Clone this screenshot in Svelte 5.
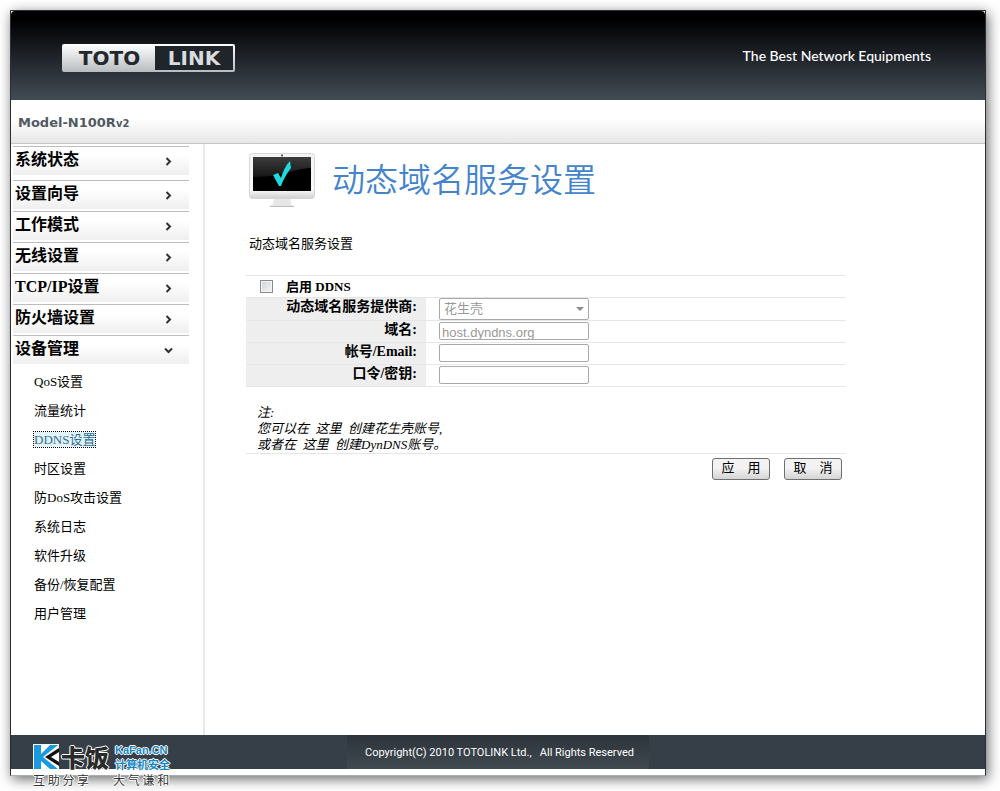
<script lang="ts">
type MenuItem = { label: string, open?: boolean }

const menu: MenuItem[] = [
    { label: "系统状态" },
    { label: "设置向导" },
    { label: "工作模式" },
    { label: "无线设置" },
    { label: "TCP/IP设置" },
    { label: "防火墙设置" },
    { label: "设备管理", open: true }
]

const submenu = [
    "QoS设置",
    "流量统计",
    "DDNS设置",
    "时区设置",
    "防DoS攻击设置",
    "系统日志",
    "软件升级",
    "备份/恢复配置",
    "用户管理"
]

let current = $state("DDNS设置")
let enabled = $state(false)
let provider = $state("花生壳")
let domain = $state("host.dyndns.org")
let account = $state("")
let password = $state("")

function select(ev: MouseEvent, name: string) {
    ev.preventDefault()
    current = name
}

function reset() {
    enabled = false
    account = ""
    password = ""
}
</script>

<div class="frame">
    <header class="header">
        <div class="logo">
            <span class="toto">TOTO</span>
            <span class="link">LINK</span>
        </div>
        <p class="slogan">The Best Network Equipments</p>
    </header>

    <div class="model">Model-N100R<span>v2</span></div>

    <div class="body">
        <nav class="sidebar">
            {#each menu as item}
                <button class="menu-item" aria-expanded={!!item.open}>
                    <span>{item.label}</span>
                    <svg width="9" height="9" viewBox="0 0 9 9">
                        {#if item.open}
                            <path d="M1 2.5 L4.5 6 L8 2.5" />
                        {:else}
                            <path d="M2.5 1 L6 4.5 L2.5 8" />
                        {/if}
                    </svg>
                </button>
            {/each}
            <ul class="submenu">
                {#each submenu as name}
                    <li>
                        <a href="#top" class:active={name === current}
                            onclick={ev => select(ev, name)}>{name}</a>
                    </li>
                {/each}
            </ul>
        </nav>

        <main class="content">
            <div class="title">
                <svg width="66" height="56" viewBox="0 0 66 56">
                    <defs>
                        <linearGradient id="case" x1="0" y1="0" x2="0" y2="1">
                            <stop offset="0" stop-color="#f4f4f4" />
                            <stop offset="0.8" stop-color="#fafafa" />
                            <stop offset="1" stop-color="#cfcfcf" />
                        </linearGradient>
                        <linearGradient id="glass" x1="0" y1="0" x2="0" y2="1">
                            <stop offset="0" stop-color="#3c3c3c" />
                            <stop offset="1" stop-color="#161616" />
                        </linearGradient>
                    </defs>
                    <path d="M25 45 H41 L42 51 L46 54 H20 L24 51 Z" fill="#e6e6e6" />
                    <path d="M21 53.5 H45" stroke="#bcbcbc" />
                    <rect x="0.5" y="0.5" width="65" height="45" rx="3" fill="url(#case)" stroke="#d6d6d6" />
                    <circle cx="33" cy="2.5" r="1" fill="#333" />
                    <rect x="4" y="4" width="58" height="34" fill="#000" />
                    <path d="M4 4 H62 V15 C46 15 36 24 4 24 Z" fill="url(#glass)" />
                    <path d="M24 22 L29 20 L32 25 C34 18 37 12 41 8 L42 15 C38 20 34 27 32 33 L30 33 Z" fill="#1fdbe0" />
                </svg>
                <h1>动态域名服务设置</h1>
            </div>
            <p class="intro">动态域名服务设置</p>

            <form onsubmit={ev => ev.preventDefault()}>
                <table>
                    <tbody>
                        <tr>
                            <td colspan="2" class="toggle">
                                <label>
                                    <input type="checkbox" bind:checked={enabled}>
                                    <span>启用 DDNS</span>
                                </label>
                            </td>
                        </tr>
                        <tr>
                            <th><label for="provider">动态域名服务提供商:</label></th>
                            <td>
                                <div class="dropdown">
                                    <select id="provider" bind:value={provider} disabled={!enabled}>
                                        <option>花生壳</option>
                                        <option>DynDNS</option>
                                    </select>
                                    <svg width="8" height="4" viewBox="0 0 8 4"><path d="M0 0 H8 L4 4 Z" /></svg>
                                </div>
                            </td>
                        </tr>
                        <tr>
                            <th><label for="domain">域名:</label></th>
                            <td><input type="text" id="domain" bind:value={domain} disabled={!enabled}></td>
                        </tr>
                        <tr>
                            <th><label for="account">帐号/Email:</label></th>
                            <td><input type="text" id="account" bind:value={account} disabled={!enabled}></td>
                        </tr>
                        <tr>
                            <th><label for="password">口令/密钥:</label></th>
                            <td><input type="password" id="password" bind:value={password} disabled={!enabled}></td>
                        </tr>
                    </tbody>
                </table>

                <div class="note">
                    注:<br>
                    您可以在&nbsp; <a href="#top">这里</a>&nbsp; 创建花生壳账号,<br>
                    或者在&nbsp; <a href="#top">这里</a>&nbsp; 创建DynDNS账号。
                </div>

                <div class="actions">
                    <button type="submit">应　用</button>
                    <button type="button" onclick={reset}>取　消</button>
                </div>
            </form>
        </main>
    </div>

    <footer class="footer">
        <p>Copyright(C) 2010 TOTOLINK Ltd.,&nbsp;&nbsp; All Rights Reserved</p>
    </footer>

    <div class="stamp">
        <div class="stamp-top">
            <svg width="26" height="26" viewBox="0 0 26 26">
                <rect width="26" height="26" fill="#fff" />
                <path d="M1 1 H8 V10 L17 1 H25 L10 13 L25 25 H17 L8 17 V25 H1 Z" fill="#1c9ae0" />
                <path d="M26 4 L12 13 L26 22 V18 L18 13 L26 8 Z" fill="#111" />
            </svg>
            <strong>卡饭</strong>
            <div class="stamp-site">
                <span class="domain">KaFan.CN</span>
                <span>计算机安全</span>
            </div>
        </div>
        <div class="stamp-bottom">
            <span>互 助 分 享</span>
            <span>大 气 谦 和</span>
        </div>
    </div>
</div>

<style>
    :global(body) {
        margin: 0;
        background-color: #fff;
    }

    .frame {
        box-sizing: border-box;
        min-height: calc(100vh - 25px);
        margin: 10px 14px 15px 10px;
        padding-bottom: 6px;
        border: 1px solid #2a2f35;
        border-bottom: 1px solid #a8adb0;
        background-color: #fff;
        box-shadow: 2px 3px 12px rgba(0, 0, 0, 0.6);
        position: relative;

        display: flex;
        flex-direction: column;
        font-family: "Liberation Serif", "Noto Sans CJK SC", serif;
        font-size: 13px;
        color: #000;
    }

    .header {
        height: 89px;
        padding: 0 54px 0 51px;
        background: linear-gradient(#000 10%, #1e2228 50%, #424b54);
        border-radius: 4px 4px 0 0;

        display: flex;
        align-items: center;
        justify-content: space-between;
    }

    .logo {
        display: flex;
        box-sizing: border-box;
        width: 173px;
        height: 28px;
        margin-top: 4px;
        padding: 2px;
        border-radius: 2px;
        background: linear-gradient(#fff, #b9bcbf);
        font-family: "DejaVu Sans", sans-serif;
        font-size: 20px;
        font-weight: 700;
        line-height: 24px;
    }

    .logo .toto {
        flex: 1;
        text-align: center;
        color: #24282c;
    }

    .logo .link {
        width: 78px;
        text-align: center;
        background-color: #20252b;
        color: #d9dcdf;
    }

    .slogan {
        margin: 0;
        color: #fff;
        font-family: Lato, sans-serif;
        font-size: 14px;
        font-weight: 500;
    }

    .model {
        height: 43px;
        padding-left: 7px;
        border-bottom: 1px solid #c6c6c6;
        background: linear-gradient(#fff 45%, #e6e6e6);
        color: #505963;
        font-family: "DejaVu Sans", sans-serif;
        font-size: 13px;
        font-weight: 700;
        line-height: 45px;
    }

    .model span {
        font-size: 10px;
    }

    .body {
        flex: 1;
        display: flex;
    }

    .sidebar {
        box-sizing: border-box;
        flex: none;
        width: 194px;
        padding: 2px 14px 0 2px;
        border-right: 2px solid #e8e8e8;
    }

    .menu-item {
        box-sizing: border-box;
        width: 100%;
        height: 29px;
        margin: 0 0 2px;
        padding: 0 16px 0 2px;
        border: 0;
        border-top: 1px solid #bdbdbd;
        background: linear-gradient(#fff 30%, #efeff0);
        font: 700 16px/24px "Liberation Serif", "Noto Sans CJK SC", serif;
        color: #000;

        display: flex;
        align-items: center;
        justify-content: space-between;
    }

    .menu-item:first-child {
        margin-bottom: 5px;
    }

    .menu-item span {
        padding-bottom: 2px;
    }

    .menu-item svg path {
        fill: none;
        stroke: #333;
        stroke-width: 2;
    }

    .submenu {
        margin: 0;
        padding: 1px 0 0 21px;
        list-style: none;
        line-height: 29px;
    }

    .submenu a {
        color: #000;
        text-decoration: none;
    }

    .submenu a.active {
        color: #2f6f94;
        background-color: #e3f3fa;
        outline: 1px dotted #000;
    }

    .content {
        flex: 1;
        max-width: 600px;
        padding: 9px 41px 0;
    }

    .title {
        display: flex;
        align-items: center;
        gap: 17px;
        padding-left: 3px;
    }

    h1 {
        margin: 0;
        color: #4384cc;
        font-size: 33px;
        font-weight: 350;
        line-height: 50px;
    }

    .intro {
        margin: 25px 0 21px 3px;
        line-height: 20px;
    }

    table {
        width: 100%;
        border-collapse: collapse;
        border-top: 1px solid #e6e6e6;
    }

    tr {
        height: 22px;
    }

    th, td {
        box-sizing: border-box;
        height: 22px;
        padding: 0;
        border-bottom: 1px solid #e6e6e6;
        line-height: 18px;
    }

    th {
        width: 180px;
        padding-right: 9px;
        background-color: #eee;
        font-size: 14px;
        text-align: right;
        vertical-align: top;
    }

    td {
        padding-left: 13px;
    }

    td.toggle {
        padding-left: 14px;
    }

    .toggle label {
        display: flex;
        align-items: center;
        gap: 13px;
        font-weight: 700;
    }

    input[type="checkbox"] {
        appearance: none;
        box-sizing: border-box;
        width: 13px;
        height: 13px;
        margin: 0;
        border: 1px solid #8b8b8b;
        background: linear-gradient(135deg, #cfd3d8, #f6f6f6);
        box-shadow: inset 0 0 0 1px #f4f4f4;
    }

    input[type="checkbox"]:checked {
        background: #3a6ea5;
    }

    input[type="text"], input[type="password"], select {
        display: block;
        box-sizing: border-box;
        width: 150px;
        height: 18px;
        margin: 0 0 2px;
        padding: 4px 2px 0;
        border: 1px solid #a9a9a9;
        border-radius: 2px;
        background-color: #fff;
        color: #000;
        font: 13px/16px "Liberation Sans", "Noto Sans CJK SC", sans-serif;
    }

    input:disabled, select:disabled {
        color: #999;
        opacity: 1;
    }

    select {
        appearance: none;
        height: 22px;
        margin: 0;
        padding: 0 4px;
    }

    .dropdown {
        position: relative;
        width: 150px;
    }

    .dropdown svg {
        position: absolute;
        top: 9px;
        right: 5px;
        fill: #8c8c8c;
        pointer-events: none;
    }

    .note {
        padding: 18px 0 0 11px;
        border-bottom: 1px solid #e6e6e6;
        font-style: italic;
        line-height: 16px;
    }

    .note a {
        color: inherit;
        text-decoration: none;
    }

    .actions {
        display: flex;
        justify-content: flex-end;
        gap: 14px;
        padding: 4px 4px 0 0;
    }

    .actions button {
        box-sizing: border-box;
        width: 58px;
        height: 22px;
        padding: 0 0 4px;
        border: 1px solid #707070;
        border-radius: 3px;
        background: linear-gradient(#f3f3f3 45%, #d4d4d4);
        color: #000;
        font: 13px/14px "Noto Sans CJK SC", sans-serif;
    }

    .footer {
        height: 34px;
        background-color: #363e47;

        display: flex;
        justify-content: center;
    }

    .footer p {
        box-sizing: border-box;
        width: 302px;
        margin: 0;
        padding-left: 3px;
        background: linear-gradient(#2c333b, #414951);
        color: #fff;
        font-family: Roboto, sans-serif;
        font-size: 11px;
        line-height: 36px;
        text-align: center;
        white-space: nowrap;
    }

    .stamp {
        position: absolute;
        left: 22px;
        bottom: -11px;
        font-family: "Noto Sans CJK SC", sans-serif;
        text-shadow: 1px 0 #fff, -1px 0 #fff, 0 1px #fff, 0 -1px #fff;
    }

    .stamp-top {
        display: flex;
        height: 30px;
    }

    .stamp strong {
        margin: 0 6px 0 2px;
        color: #2a2a2a;
        font-size: 24px;
        font-weight: 900;
        line-height: 26px;
    }

    .stamp-site {
        display: flex;
        flex-direction: column;
        color: #1787c4;
        font-size: 11px;
        font-weight: 700;
        line-height: 14px;
    }

    .stamp-site .domain {
        font-family: "Liberation Sans", sans-serif;
        line-height: 13px;
    }

    .stamp-bottom {
        display: flex;
        gap: 24px;
        color: #333;
        font-size: 12px;
        line-height: 12px;
    }
</style>
